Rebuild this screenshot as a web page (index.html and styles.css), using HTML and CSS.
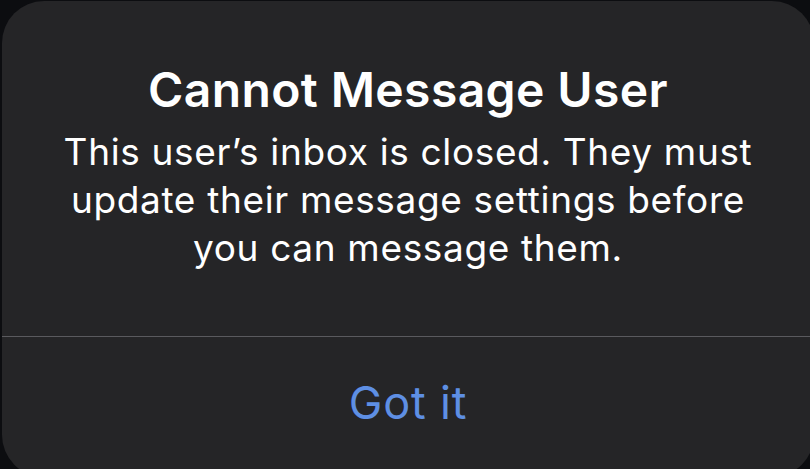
FILE: index.html
```html
<!DOCTYPE html>
<html>
<head>
    <title>Cannot Message User</title>
    <link rel="stylesheet" href="styles.css">
</head>
<body>
    <div class="alert">
        <div class="alert-body">
            <h1 class="alert-title">Cannot Message User</h1>
            <p class="alert-message">This user’s inbox is closed. They must<br>update their message settings before<br>you can message them.</p>
        </div>
        <div class="alert-actions">
            <button class="alert-btn">Got it</button>
        </div>
    </div>
</body>
</html>
```

FILE: styles.css
```css
:root {
    --backdrop-color: #0c0d10;
    --alert-color: #252527;
    --text-color: #ffffff;
    --separator-color: #5a5a5e;
    --action-color: #5e8fe4;
}

html, body {
    height: 100%;
}

body {
    font-family: Inter, "Noto Sans", sans-serif;
    background-color: var(--backdrop-color);
    color: var(--text-color);
    margin: 0;
    padding: 1px 0 0 2px;
    overflow: hidden;
    box-sizing: border-box;
}

.alert {
    width: 812px;
    height: 476px;
    background: var(--alert-color);
    border-radius: 42px;
    display: flex;
    flex-direction: column;
}

.alert-body {
    height: 335px;
    box-sizing: border-box;
    padding-top: 61px;
    text-align: center;
}

.alert-title {
    font-size: 48px;
    font-weight: 600;
    line-height: 56px;
    letter-spacing: 0.4px;
    margin: 0 0 10px;
}

.alert-message {
    font-size: 37px;
    font-weight: 400;
    line-height: 48px;
    letter-spacing: 0.65px;
    margin: 0;
}

.alert-actions {
    border-top: 1px solid var(--separator-color);
    height: 134px;
    display: flex;
    justify-content: center;
    align-items: flex-start;
}

.alert-btn {
    background: none;
    border: none;
    color: var(--action-color);
    font-family: inherit;
    font-size: 45px;
    font-weight: 400;
    letter-spacing: 0.8px;
    padding: 0;
    margin-top: 40px;
    line-height: 52px;
    cursor: pointer;
}
```
